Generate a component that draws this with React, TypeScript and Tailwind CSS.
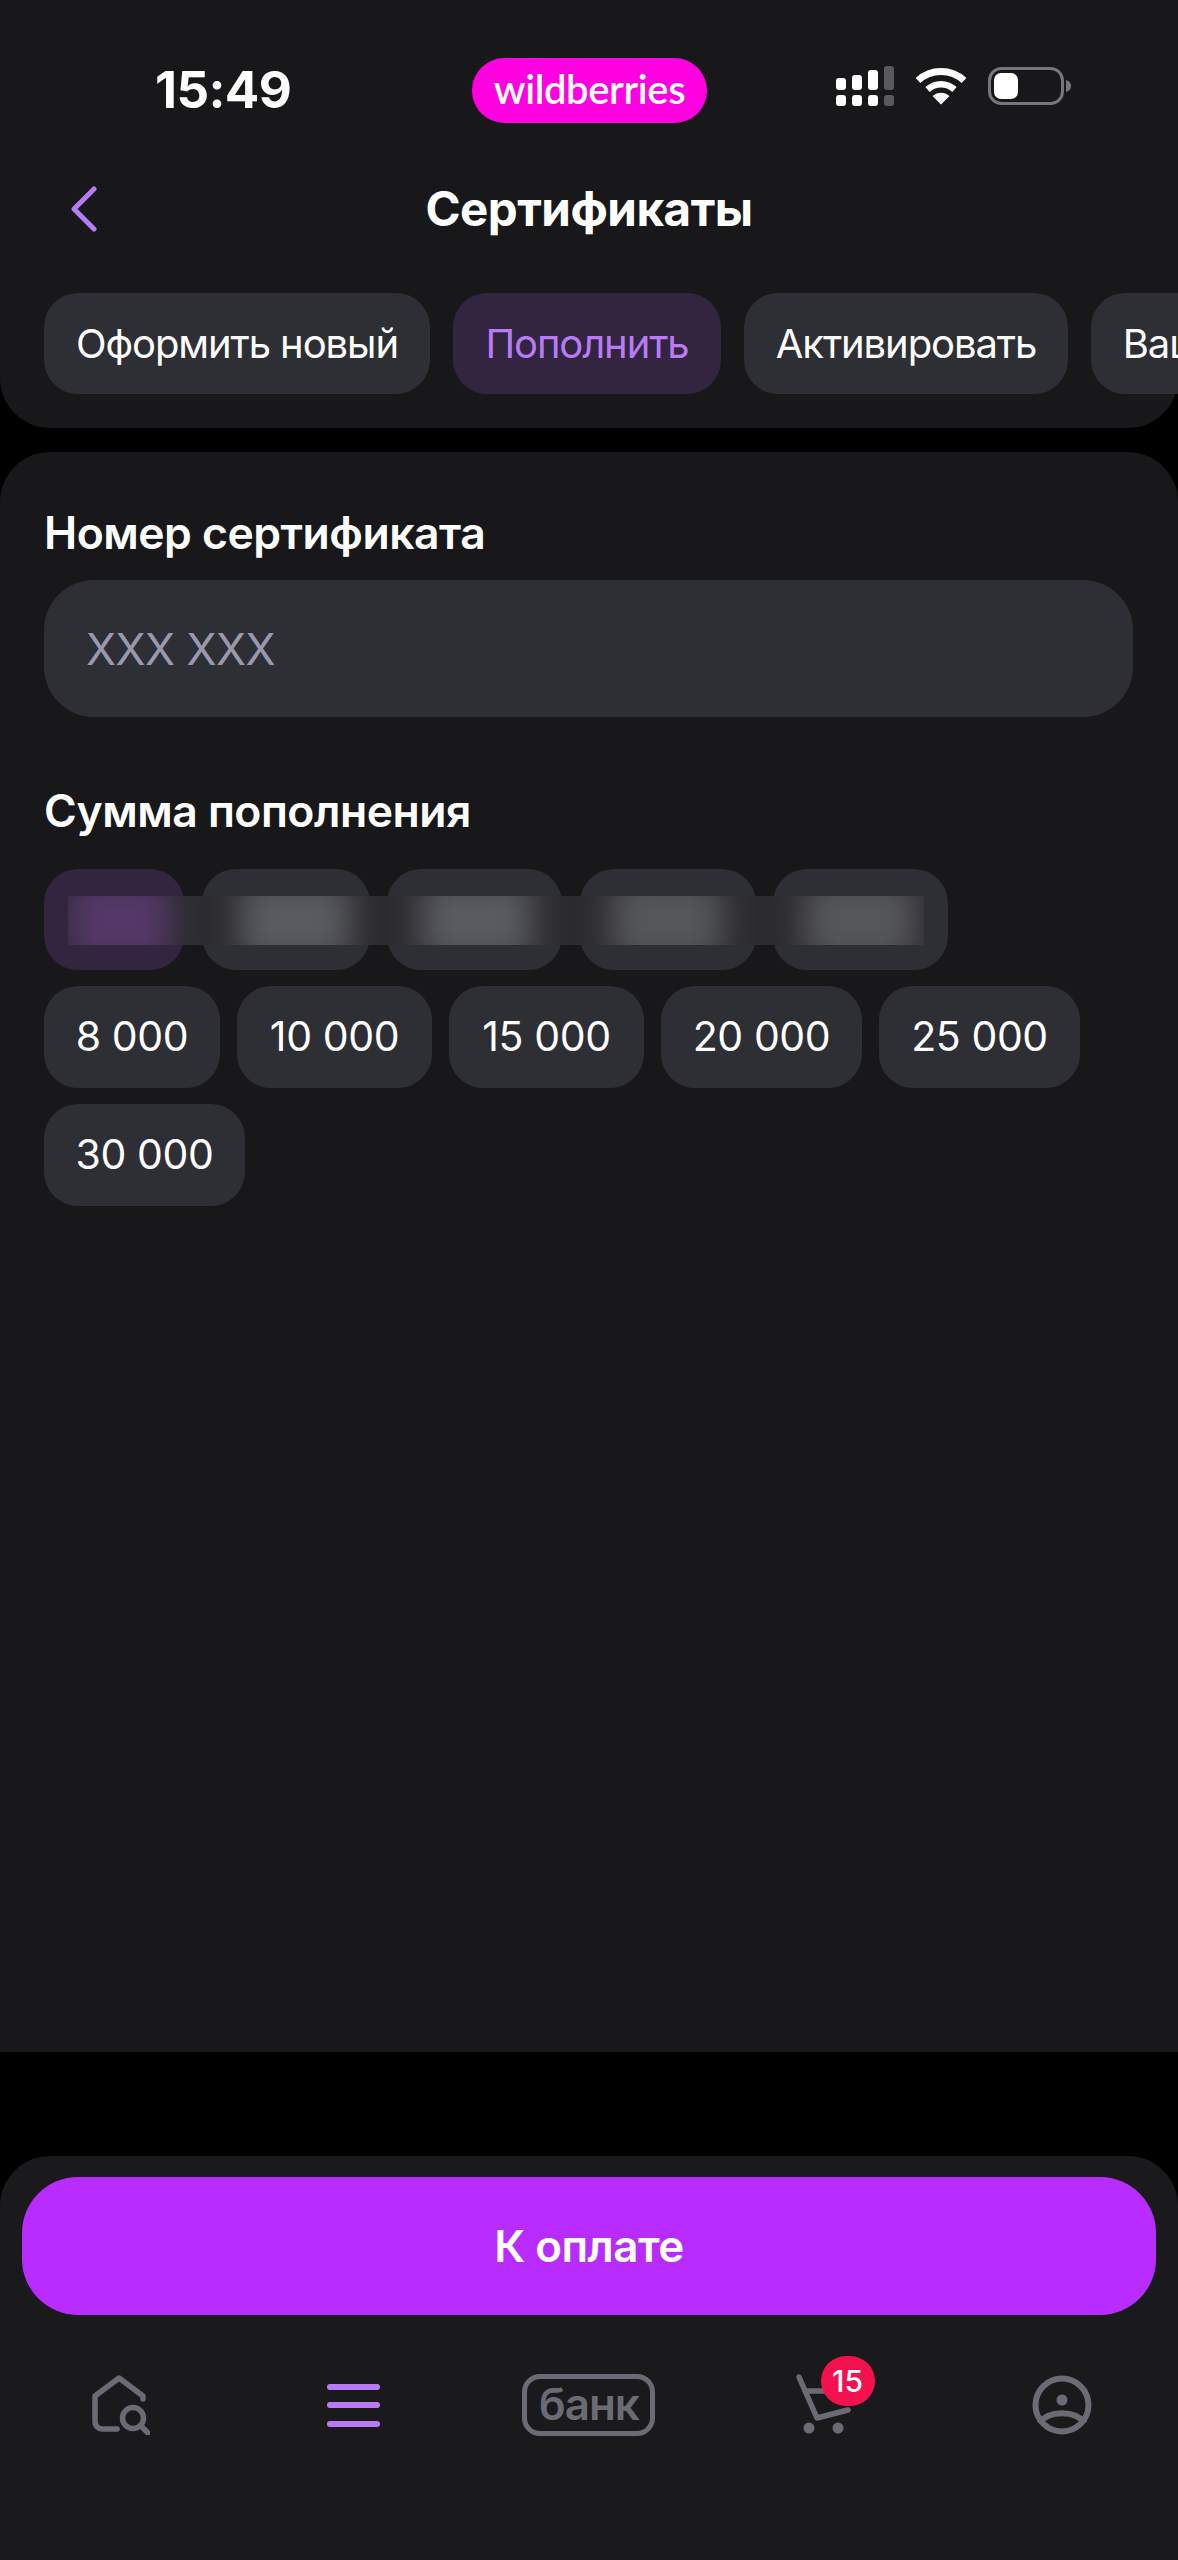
const FONT = "font-['Inter','Noto_Sans',sans-serif]";

const TABS = [
  { label: "Оформить новый", width: "w-[386px]", active: false },
  { label: "Пополнить", width: "w-[268px]", active: true },
  { label: "Активировать", width: "w-[324px]", active: false },
  { label: "Ваши сертификаты", width: "w-[420px]", active: false },
];

const AMOUNTS = [
  { label: "8 000", width: "w-[176px]" },
  { label: "10 000", width: "w-[195px]" },
  { label: "15 000", width: "w-[195px]" },
  { label: "20 000", width: "w-[201px]" },
  { label: "25 000", width: "w-[201px]" },
  { label: "30 000", width: "w-[201px]" },
];

// status bar glyphs
function SignalIcon() {
  return (
    <svg width="58" height="40" viewBox="0 0 58 40" className="shrink-0">
      <rect x="0" y="12" width="10" height="12" rx="3" fill="#fff" />
      <rect x="16" y="9" width="10" height="15" rx="3" fill="#fff" />
      <rect x="32" y="4" width="10" height="20" rx="3" fill="#fff" />
      <rect x="48" y="0" width="10" height="24" rx="3" fill="#5a5a5e" />
      <rect x="0" y="29" width="10" height="11" rx="3" fill="#fff" />
      <rect x="16" y="29" width="10" height="11" rx="3" fill="#fff" />
      <rect x="32" y="29" width="10" height="11" rx="3" fill="#fff" />
      <rect x="48" y="29" width="10" height="11" rx="3" fill="#5a5a5e" />
    </svg>
  );
}

function WifiIcon() {
  return (
    <svg width="52" height="38" viewBox="0 0 52 38" className="shrink-0">
      <path d="M3 13.5 C16 1.5 36 1.5 49 13.5" fill="none" stroke="#fff" strokeWidth="7" strokeLinecap="butt" />
      <path d="M12.5 22.5 C20.5 15.5 31.5 15.5 39.5 22.5" fill="none" stroke="#fff" strokeWidth="6.5" strokeLinecap="butt" />
      <path d="M17.5 29 C22.5 24.5 29.5 24.5 34.5 29 L26 37.5 Z" fill="#fff" />
    </svg>
  );
}

function BatteryIcon() {
  return (
    <svg width="84" height="38" viewBox="0 0 84 38" className="shrink-0">
      <rect x="1.5" y="1.5" width="73" height="35" rx="12" fill="none" stroke="#77777b" strokeWidth="3" />
      <rect x="6" y="6" width="24" height="26" rx="7" fill="#fff" />
      <path d="M78 13 C81.5 14 83 16 83 19 C83 22 81.5 24 78 25 Z" fill="#77777b" />
    </svg>
  );
}

function Pill({ label, width, active, wide }: { label: string; width: string; active?: boolean; wide?: boolean }) {
  return (
    <div
      className={
        "shrink-0 rounded-[34px] flex items-center justify-center whitespace-nowrap " +
        (wide ? "h-[102px] text-[41px] tracking-[-0.4px] " : "h-[101px] text-[40px] tracking-[-1.1px] ") +
        width +
        " " +
        (active ? "bg-[#33243f] text-[#b77cf5]" : "bg-[#2e2e35] text-white")
      }
    >
      {label}
    </div>
  );
}

// ─── Nav icons ─────────────────────────────────────────
function HomeSearchIcon() {
  return (
    <svg width="60" height="60" viewBox="0 0 60 60" fill="none" stroke="#6b6b75" strokeWidth="5.5" strokeLinecap="round" strokeLinejoin="round" className="ml-[4px]">
      <path d="M53 24 L53 21 L29 3 L5 21 L5 46 C5 51 8 54 13 54 L27 54" />
      <circle cx="43" cy="43" r="10.5" />
      <path d="M51 51 L58 58" />
    </svg>
  );
}

function CartIcon() {
  return (
    <svg width="62" height="62" viewBox="0 0 62 62" fill="none" stroke="#6b6b75" strokeWidth="5.5" strokeLinecap="round" strokeLinejoin="round">
      <path d="M3 3 L21 44 L52 36" />
      <path d="M9 17 L40 17" />
      <circle cx="13" cy="54" r="5.5" fill="#6b6b75" stroke="none" />
      <circle cx="42" cy="54" r="5.5" fill="#6b6b75" stroke="none" />
    </svg>
  );
}

function ProfileIcon() {
  return (
    <svg width="60" height="60" viewBox="0 0 60 60" fill="none" stroke="#6b6b75" strokeWidth="6" className="ml-[3px]">
      <circle cx="30" cy="30" r="26.5" />
      <circle cx="30" cy="25" r="5.5" fill="#6b6b75" stroke="none" />
      <path d="M7 48 C17 35 43 35 53 48" />
    </svg>
  );
}

export default function App() {
  return (
    <div className={"w-[1178px] h-[2560px] bg-black flex flex-col overflow-hidden text-white " + FONT}>
      {/* Top panel */}
      <header className="h-[428px] shrink-0 bg-[#18181b] rounded-b-[50px] pt-[58px]">
        <div className="h-[65px] flex items-center pl-[155px]">
          <span className="w-[140px] text-[51px] font-bold tracking-[-0.6px] leading-none pb-[3px]">15:49</span>
          <div className="ml-[177px] w-[235px] h-[65px] rounded-full bg-[#ff00e1] flex items-center justify-center font-['Lato',sans-serif] text-[40px] font-semibold tracking-[-0.4px] leading-none pb-[4px]">
            wildberries
          </div>
          <div className="ml-[129px] flex items-center gap-[21px] pb-[9px]">
            <SignalIcon />
            <WifiIcon />
            <BatteryIcon />
          </div>
        </div>

        <div className="mt-[56px] h-[60px] grid grid-cols-[1fr_auto_1fr] items-center">
          <svg width="30" height="46" viewBox="0 0 30 46" fill="none" stroke="#b77cf5" strokeWidth="5" strokeLinecap="round" strokeLinejoin="round" className="ml-[69px]">
            <path d="M25 3 L5 23 L25 43" />
          </svg>
          <h1 className="text-[47.5px] font-bold tracking-[-0.5px] leading-none">Сертификаты</h1>
          <div />
        </div>

        <div className="mt-[54px] pl-[44px] flex gap-[23px] overflow-hidden">
          {TABS.map((t) => (
            <Pill key={t.label} label={t.label} width={t.width} active={t.active} />
          ))}
        </div>
      </header>

      {/* Form */}
      <main className="mt-[24px] h-[1600px] shrink-0 bg-[#18181b] rounded-t-[50px] pt-[55px] px-[44px]">
        <h2 className="text-[44.5px] font-semibold leading-[52px] tracking-[-0.5px]">Номер сертификата</h2>
        <div className="mt-[21px] w-[1089px] h-[137px] rounded-[50px] bg-[#2e2e35] flex items-center pl-[42px] text-[44px] text-[#9a98ac] tracking-[-0.5px]">
          XXX XXX
        </div>

        <h2 className="mt-[68px] text-[44.5px] font-semibold leading-[52px] tracking-[-0.5px]">Сумма пополнения</h2>

        <div className="relative mt-[32px] flex gap-[17.5px]">
          <div className="h-[101px] w-[140px] rounded-[34px] bg-[#33243f]" />
          <div className="h-[101px] w-[168px] rounded-[34px] bg-[#2e2e35]" />
          <div className="h-[101px] w-[175px] rounded-[34px] bg-[#2e2e35]" />
          <div className="h-[101px] w-[176px] rounded-[34px] bg-[#2e2e35]" />
          <div className="h-[101px] w-[175px] rounded-[34px] bg-[#2e2e35]" />
          {/* Blurred amounts */}
          <div className="absolute left-[24px] top-[27px] w-[856px] h-[49px] overflow-hidden bg-[#2c2c30] flex items-center">
            <div className="shrink-0 ml-[2px] w-[100px] h-[80px] bg-[#553869] blur-[16px]" />
            <div className="shrink-0 ml-[70px] w-[110px] h-[80px] bg-[#5a5b60] blur-[16px]" />
            <div className="shrink-0 ml-[72px] w-[110px] h-[80px] bg-[#5a5b60] blur-[16px]" />
            <div className="shrink-0 ml-[80px] w-[110px] h-[80px] bg-[#56575b] blur-[16px]" />
            <div className="shrink-0 ml-[83px] w-[110px] h-[80px] bg-[#56575b] blur-[16px]" />
          </div>
        </div>

        <div className="mt-[16px] flex flex-wrap gap-x-[17px] gap-y-[16px]">
          {AMOUNTS.map((a) => (
            <Pill key={a.label} label={a.label} width={a.width} wide />
          ))}
        </div>
      </main>

      {/* Bottom bar */}
      <footer className="mt-[104px] flex-1 bg-[#1a1a1d] rounded-t-[50px] pt-[21px]">
        <div className="mx-[22px] h-[138px] rounded-[56px] bg-[#b92cff] flex items-center justify-center text-[44px] font-semibold tracking-[-0.5px]">
          К оплате
        </div>
        <nav className="mt-[28px] h-[124px] grid grid-cols-5 items-center justify-items-center">
          <HomeSearchIcon />
          <div className="w-[53px] flex flex-col gap-[12.5px]">
            <div className="h-[6px] rounded-full bg-[#b77cf5]" />
            <div className="h-[6px] rounded-full bg-[#b77cf5]" />
            <div className="h-[6px] rounded-full bg-[#b77cf5]" />
          </div>
          <div className="w-[133px] h-[62px] rounded-[18px] border-[5px] border-[#6b6b75] flex items-center justify-center text-[44px] font-semibold text-[#6b6b75] leading-none tracking-[-1px] pb-[3px]">
            банк
          </div>
          <div className="relative ml-[4px]">
            <CartIcon />
            <div className="absolute left-[25px] top-[-18px] w-[54px] h-[50px] rounded-full bg-[#f5114f] flex items-center justify-center text-[30px] font-medium text-white leading-none">
              15
            </div>
          </div>
          <ProfileIcon />
        </nav>
      </footer>
    </div>
  );
}
